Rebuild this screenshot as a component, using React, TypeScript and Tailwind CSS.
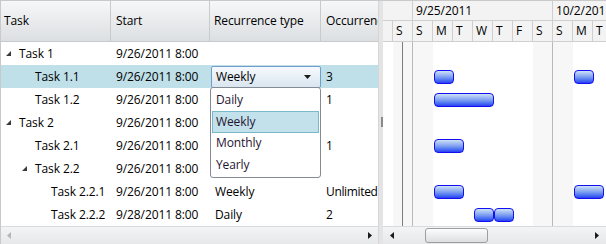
import React from 'react';

type Row = {
  name: string;
  level: 0 | 1 | 2;
  exp?: boolean;
  start: string;
  rec: string;
  occ: string;
  selected?: boolean;
};

const rows: Row[] = [
  { name: 'Task 1', level: 0, exp: true, start: '9/26/2011 8:00', rec: '', occ: '' },
  { name: 'Task 1.1', level: 1, start: '9/26/2011 8:00', rec: 'combo', occ: '3', selected: true },
  { name: 'Task 1.2', level: 1, start: '9/26/2011 8:00', rec: '', occ: '1' },
  { name: 'Task 2', level: 0, exp: true, start: '9/26/2011 8:00', rec: '', occ: '' },
  { name: 'Task 2.1', level: 1, start: '9/26/2011 8:00', rec: '', occ: '1' },
  { name: 'Task 2.2', level: 1, exp: true, start: '9/26/2011 8:00', rec: '', occ: '' },
  { name: 'Task 2.2.1', level: 2, start: '9/26/2011 8:00', rec: 'Weekly', occ: 'Unlimited' },
  { name: 'Task 2.2.2', level: 2, start: '9/28/2011 8:00', rec: 'Daily', occ: '2' },
];

const indent: Record<number, string> = {
  0: 'pl-[2px]',
  1: 'pl-[18px]',
  2: 'pl-[34px]',
};

// bars: [row index, left (relative to gantt pane), width]
const bars: [number, number, number][] = [
  [1, 51, 20],
  [1, 191, 20],
  [2, 51, 60],
  [4, 51, 30],
  [6, 51, 30],
  [6, 191, 30],
  [7, 91, 20],
  [7, 111, 20],
];

const days = ['S', 'S', 'M', 'T', 'W', 'T', 'F', 'S', 'S', 'M', 'T'];

function Expander() {
  return (
    <svg width="16" height="8" viewBox="0 0 16 8" className="shrink-0">
      <polygon points="8,1 8,6 3,6" fill="#3a3a3a" />
    </svg>
  );
}

function ArrowLeft({ color }: { color: string }) {
  return (
    <svg width="4" height="7" viewBox="0 0 4 7">
      <polygon points="4,0 4,7 0,3.5" fill={color} />
    </svg>
  );
}

function ArrowRight({ color }: { color: string }) {
  return (
    <svg width="4" height="7" viewBox="0 0 4 7">
      <polygon points="0,0 0,7 4,3.5" fill={color} />
    </svg>
  );
}

function Combo() {
  return (
    <div className="h-[22px] w-[110px] rounded-[2px] border border-[#6f9fc9] bg-gradient-to-b from-[#f7fafd] to-[#d9e5f0] flex items-center pl-[4px] pr-[9px]">
      <span className="flex-1">Weekly</span>
      <svg width="7" height="4" viewBox="0 0 7 4">
        <polygon points="0,0 7,0 3.5,4" fill="#1a1a1a" />
      </svg>
    </div>
  );
}

export default function App() {
  return (
    <div className="w-[606px] h-[244px] flex bg-white text-[12px] tracking-[-0.1px] text-black font-['Open_Sans','Noto_Sans',sans-serif] overflow-hidden border-t border-[#c9c9c9] relative">
      {/* Left grid pane */}
      <div className="w-[378px] shrink-0 flex flex-col overflow-hidden border-l border-[#c9c9c9]">
        {/* Header */}
        <div className="h-[41px] shrink-0 flex border-b border-[#c6c8ca] bg-gradient-to-b from-[#f6f7f8] to-[#dcdfe2]">
          <div className="w-[110px] shrink-0 border-r border-[#c8cacc] flex items-center pl-[3px]">Task</div>
          <div className="w-[99px] shrink-0 border-r border-[#c8cacc] flex items-center pl-[5px]">Start</div>
          <div className="w-[111px] shrink-0 border-r border-[#c8cacc] flex items-center pl-[4px]">Recurrence type</div>
          <div className="flex-1 flex items-center pl-[5px] whitespace-nowrap overflow-hidden">Occurrences</div>
        </div>
        {/* Rows */}
        <div className="flex-1 flex flex-col">
          {rows.map((r, i) => (
            <div
              key={i}
              className={`h-[23px] shrink-0 flex items-center whitespace-nowrap ${r.selected ? 'bg-[#bfdfe9]' : ''}`}
            >
              <div className={`w-[110px] shrink-0 flex items-center ${indent[r.level]}`}>
                {r.exp ? <Expander /> : <span className="w-[16px] shrink-0" />}
                <span>{r.name}</span>
              </div>
              <div className="w-[99px] shrink-0 pl-[5px]">{r.start}</div>
              <div className="w-[111px] shrink-0 pl-[1px] flex items-center">
                {r.rec === 'combo' ? <Combo /> : <span className="pl-[4px]">{r.rec}</span>}
              </div>
              <div className="flex-1 pl-[5px] tracking-[-0.35px]">{r.occ}</div>
            </div>
          ))}
        </div>
        {/* Scrollbar */}
        <div className="h-[18px] shrink-0 border-t border-[#d9dadb] bg-gradient-to-b from-[#f3f4f5] to-[#e6e8ea] flex items-center justify-between pl-[6px] pr-[6px]">
          <ArrowLeft color="#b4b6b8" />
          <ArrowRight color="#1a1a1a" />
        </div>
      </div>

      {/* Splitter */}
      <div className="w-[5px] shrink-0 bg-[#e4e4e4] border-l border-[#d6d6d6] flex flex-col items-end pt-[116px]">
        <div className="w-[2px] h-[10px] bg-[#8a8a8a]" />
      </div>

      {/* Gantt pane */}
      <div className="flex-1 flex flex-col overflow-hidden">
        {/* Header */}
        <div className="h-[41px] shrink-0 bg-[#f3f3f3] flex flex-col">
          <div className="h-[20px] shrink-0 flex border-b border-[#cfcfcf] whitespace-nowrap">
            <div className="w-[30px] shrink-0 border-r border-[#cfcfcf]" />
            <div className="w-[140px] shrink-0 border-r border-[#cfcfcf] pl-[3px] flex items-center">9/25/2011</div>
            <div className="w-[140px] shrink-0 pl-[3px] flex items-center">10/2/2011</div>
          </div>
          <div className="h-[21px] shrink-0 flex border-b border-[#cfcfcf] whitespace-nowrap">
            <div className="w-[10px] shrink-0 border-r border-[#cfcfcf]" />
            {days.map((d, i) => (
              <div key={i} className="w-[20px] shrink-0 border-r border-[#cfcfcf] pl-[3px] flex items-center">
                {d}
              </div>
            ))}
          </div>
        </div>
        {/* Body */}
        <div className="flex-1 relative overflow-hidden">
          <div className="absolute inset-0 flex">
            <div className="w-[10px] shrink-0" />
            <div className="w-[20px] shrink-0 bg-[#f7f7f7] border-r border-[#b9b9b9]" />
            <div className="w-[20px] shrink-0 bg-[#f7f7f7]" />
            <div className="w-[100px] shrink-0" />
            <div className="w-[20px] shrink-0 bg-[#f7f7f7] border-r border-[#b9b9b9]" />
            <div className="w-[20px] shrink-0 bg-[#f7f7f7]" />
            <div className="flex-1" />
          </div>
          <div className="absolute top-0 bottom-0 left-[19px] w-px bg-[#7d7d7d]" />
          {bars.map(([row, left, width], i) => (
            <div
              key={i}
              className="absolute h-[14px] rounded-[4px] border border-[#1010f0] bg-gradient-to-b from-[#cfe2f6] via-[#7f9ff0] to-[#2b3cf2]"
              style={{ top: row * 23 + 5, left, width }}
            />
          ))}
        </div>
        {/* Scrollbar */}
        <div className="h-[18px] shrink-0 border-t border-[#d9dadb] bg-gradient-to-b from-[#f3f4f5] to-[#e6e8ea] flex items-center pl-[7px] pr-[7px]">
          <ArrowLeft color="#1a1a1a" />
          <div className="ml-[31px] w-[63px] h-[15px] rounded-[3px] border border-[#9c9ea0] bg-gradient-to-b from-[#fdfdfd] to-[#dcdedf]" />
          <div className="flex-1" />
          <ArrowRight color="#1a1a1a" />
        </div>
      </div>

      {/* Dropdown popup */}
      <div className="absolute left-[210px] top-[86px] w-[111px] h-[91px] bg-white border border-[#848b93] rounded-[3px] py-[1px] px-[1px] flex flex-col">
        <div className="h-[22px] flex items-center pl-[4px] text-[#1f1430]">Daily</div>
        <div className="h-[22px] flex items-center pl-[3px] bg-[#c3e1ea] border border-[#7ab8cb] text-[#1f1430]">Weekly</div>
        <div className="h-[22px] flex items-center pl-[4px] text-[#1f1430]">Monthly</div>
        <div className="h-[22px] flex items-center pl-[4px] text-[#1f1430]">Yearly</div>
      </div>
    </div>
  );
}
